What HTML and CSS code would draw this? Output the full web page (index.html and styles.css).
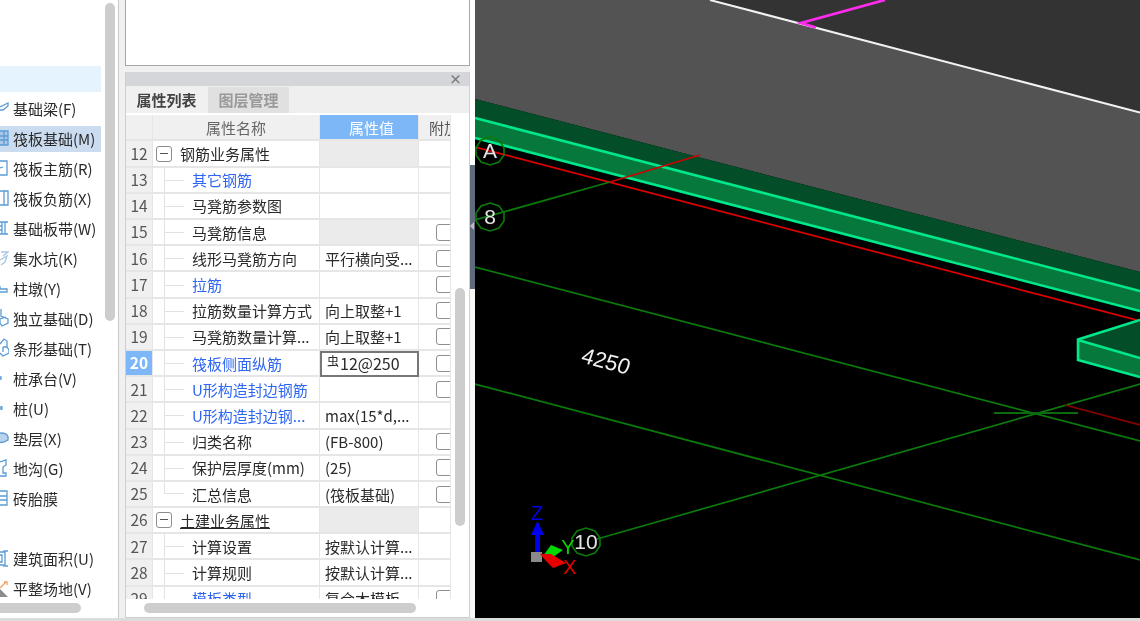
FILE: index.html
```html
<!DOCTYPE html>
<html lang="zh-CN">
<head>
<meta charset="utf-8">
<title>属性列表</title>
<link rel="stylesheet" href="styles.css">
</head>
<body>
<div class="app">
  <nav class="nav">
    <div class="item hover"></div>
    <div class="item"><svg class="ico" viewBox="0 0 9 20"><path d="M0 9 L8 5 L8 8 L3 12 L0 12"/></svg>基础梁(F)</div>
    <div class="item sel"><svg class="ico tint" viewBox="0 0 9 20"><path d="M0 3 H8 V17 H0 M0 8 H8 M0 12 H8 M4 3 V17"/></svg>筏板基础(M)</div>
    <div class="item"><svg class="ico" viewBox="0 0 9 20"><path d="M0 3 H7 V17 H0 M0 10 L3 9"/></svg>筏板主筋(R)</div>
    <div class="item"><svg class="ico" viewBox="0 0 9 20"><path d="M0 3 H8 V17 H0 M4 3 V17"/></svg>筏板负筋(X)</div>
    <div class="item"><svg class="ico" viewBox="0 0 9 20"><path d="M0 4 H8 M0 16 H8 M2 4 V16 M0 8 H2 M0 12 H2 M5 4 V16"/></svg>基础板带(W)</div>
    <div class="item"><svg class="ico soft" viewBox="0 0 9 20"><path d="M1 4 H8 L3 8 M0 12 L7 8 L5 14 L1 17"/></svg>集水坑(K)</div>
    <div class="item"><svg class="ico" viewBox="0 0 9 20"><path d="M0 8 V11 M0 11 H7 V14 H0" /></svg>柱墩(Y)</div>
    <div class="item"><svg class="ico" viewBox="0 0 9 20"><path d="M1 1 V8 L8 11 V15 L2 18 L0 15 V11 L6 9"/></svg>独立基础(D)</div>
    <div class="item"><svg class="ico" viewBox="0 0 9 20"><path d="M0 6 L4 1 L7 3 V9 L9 12 V15 L3 18 L0 15 M3 9 L7 9 M3 9 V14"/></svg>条形基础(T)</div>
    <div class="item"><svg class="ico" viewBox="0 0 9 20"><path d="M0 9 H1 V11 H0"/></svg>桩承台(V)</div>
    <div class="item"><svg class="ico" viewBox="0 0 9 20"><path d="M0 9 H2 V11 H0"/></svg>桩(U)</div>
    <div class="item"><svg class="ico fill" viewBox="0 0 9 20"><ellipse cx="1" cy="9" rx="7" ry="4"/><path d="M-6 9 V12 Q1 17 8 12 V9"/></svg>垫层(X)</div>
    <div class="item"><svg class="ico" viewBox="0 0 9 20"><path d="M0 4 L6 2 V7 L3 9 V15 H6 V18 H0"/></svg>地沟(G)</div>
    <div class="item"><svg class="ico" viewBox="0 0 9 20"><path d="M0 3 H7 V17 H0 M0 8 H7 M0 12 H7"/></svg>砖胎膜</div>
    <div class="item"></div>
    <div class="item"><svg class="ico" viewBox="0 0 9 20"><path d="M0 4 H5 V17 H0 M5 3 H8 M5 18 H8 M4 4 V2 M4 19 V17 M0 7 H2 V14 H0"/></svg>建筑面积(U)</div>
    <div class="item"><svg class="ico orange" viewBox="0 0 9 20"><path d="M0 10 L6 4 M4 4 H7 V7"/><path class="grey" d="M0 11 L8 19 H0 Z"/></svg>平整场地(V)</div>
    <i class="thumb nav-v"></i>
    <i class="thumb nav-h"></i>
  </nav>

  <main class="side">
    <div class="blank"></div>
    <section class="props">
      <header class="title"><span class="close">×</span></header>
      <div class="tabs">
        <span class="tab on">属性列表</span>
        <span class="tab">图层管理</span>
      </div>
      <div class="grid">
        <div class="row head"><span class="no"></span><span class="name">属性名称</span><span class="val">属性值</span><span class="ext">附加</span></div>
        <div class="row"><span class="no">12</span><span class="name group"><b class="fold"></b>钢筋业务属性</span><span class="val off"></span><span class="ext"></span></div>
        <div class="row"><span class="no">13</span><span class="name link"><i class="tree"></i>其它钢筋</span><span class="val"></span><span class="ext"></span></div>
        <div class="row"><span class="no">14</span><span class="name"><i class="tree"></i>马凳筋参数图</span><span class="val"></span><span class="ext"></span></div>
        <div class="row"><span class="no">15</span><span class="name"><i class="tree"></i>马凳筋信息</span><span class="val off"></span><span class="ext"><i class="chk"></i></span></div>
        <div class="row"><span class="no">16</span><span class="name"><i class="tree"></i>线形马凳筋方向</span><span class="val">平行横向受...</span><span class="ext"><i class="chk"></i></span></div>
        <div class="row"><span class="no">17</span><span class="name link"><i class="tree"></i>拉筋</span><span class="val"></span><span class="ext"><i class="chk"></i></span></div>
        <div class="row"><span class="no">18</span><span class="name"><i class="tree"></i>拉筋数量计算方式</span><span class="val">向上取整+1</span><span class="ext"><i class="chk"></i></span></div>
        <div class="row"><span class="no">19</span><span class="name"><i class="tree"></i>马凳筋数量计算...</span><span class="val">向上取整+1</span><span class="ext"><i class="chk"></i></span></div>
        <div class="row"><span class="no cur">20</span><span class="name link"><i class="tree"></i>筏板侧面纵筋</span><span class="val edit"><span class="bar">虫</span>12@250</span><span class="ext"><i class="chk"></i></span></div>
        <div class="row"><span class="no">21</span><span class="name link"><i class="tree"></i>U形构造封边钢筋</span><span class="val"></span><span class="ext"><i class="chk"></i></span></div>
        <div class="row"><span class="no">22</span><span class="name link"><i class="tree"></i>U形构造封边钢...</span><span class="val">max(15*d,...</span><span class="ext"></span></div>
        <div class="row"><span class="no">23</span><span class="name"><i class="tree"></i>归类名称</span><span class="val">(FB-800)</span><span class="ext"><i class="chk"></i></span></div>
        <div class="row"><span class="no">24</span><span class="name"><i class="tree"></i>保护层厚度(mm)</span><span class="val">(25)</span><span class="ext"><i class="chk"></i></span></div>
        <div class="row"><span class="no">25</span><span class="name"><i class="tree end"></i>汇总信息</span><span class="val">(筏板基础)</span><span class="ext"><i class="chk"></i></span></div>
        <div class="row"><span class="no">26</span><span class="name group"><b class="fold"></b><u>土建业务属性</u></span><span class="val off"></span><span class="ext"></span></div>
        <div class="row"><span class="no">27</span><span class="name"><i class="tree"></i>计算设置</span><span class="val">按默认计算...</span><span class="ext"></span></div>
        <div class="row"><span class="no">28</span><span class="name"><i class="tree"></i>计算规则</span><span class="val">按默认计算...</span><span class="ext"></span></div>
        <div class="row"><span class="no">29</span><span class="name link"><i class="tree"></i>模板类型</span><span class="val">复合木模板</span><span class="ext"><i class="chk"></i></span></div>
      </div>
      <i class="thumb grid-v"></i>
      <i class="thumb grid-h"></i>
    </section>
  </main>

  <div class="split"><span class="handle"></span></div>

  <svg class="view" viewBox="475 0 665 618" xmlns="http://www.w3.org/2000/svg">
    <rect x="475" y="0" width="665" height="618" fill="#000"/>
    <polygon points="710,0 1140,112.6 1140,0" fill="#333"/>
    <polygon points="475,0 710,0 1140,112.6 1140,272 475,99" fill="#535353"/>
    <line x1="710" y1="0" x2="1140" y2="112.6" stroke="#f2f2f2" stroke-width="2"/>
    <polyline points="885,0 801,23 816,27.5" fill="none" stroke="#ff2cf0" stroke-width="2.8"/>

    <polygon points="475,99 1140,272 1140,291 475,118" fill="#034d28"/>
    <polygon points="475,118 1140,291 1140,311 475,138" fill="#06783c"/>
    <line x1="475" y1="118" x2="1140" y2="291" stroke="#00e88c" stroke-width="2.6"/>
    <line x1="475" y1="138" x2="1140" y2="311" stroke="#00e88c" stroke-width="2.6"/>

    <line x1="475" y1="147" x2="1140" y2="321" stroke="#e00000" stroke-width="1.7"/>
    <line x1="610" y1="182" x2="700" y2="155" stroke="#d00000" stroke-width="1.5"/>
    <line x1="475" y1="220" x2="610" y2="182" stroke="#0b7a0b" stroke-width="1.7"/>

    <polygon points="1078,340 1140,320 1140,358" fill="#034d28"/>
    <polygon points="1078,340 1140,358 1140,377 1078,360" fill="#06783c"/>
    <polyline points="1140,320 1078,339.5 1078,360 1140,377" fill="none" stroke="#00e88c" stroke-width="2.6"/>
    <line x1="1078" y1="340" x2="1140" y2="358" stroke="#00e88c" stroke-width="2.6"/>

    <line x1="475" y1="267" x2="1140" y2="441" stroke="#0b7a0b" stroke-width="1.7"/>
    <line x1="597" y1="539" x2="1140" y2="384" stroke="#0b7a0b" stroke-width="1.7"/>
    <line x1="475" y1="384" x2="1140" y2="560" stroke="#0b7a0b" stroke-width="1.7"/>
    <line x1="994" y1="413" x2="1078" y2="413" stroke="#0b6a0b" stroke-width="1.8"/>
    <line x1="1065" y1="405" x2="1140" y2="425" stroke="#8a0000" stroke-width="1.7"/>

    <polygon class="hex" points="490,137 499,140 504,148 504,155 499,162 490,165 481,162 476,155 476,148 481,140"/>
    <polygon class="hex" points="490,203 499,206 504,213 504,221 499,228 490,231 481,228 476,221 476,213 481,206"/>
    <polygon class="hex" points="586,528 595,531 600,538 600,546 595,553 586,556 577,553 572,546 572,538 577,531"/>
    <text class="axis" x="490" y="158">A</text>
    <text class="axis" x="490" y="224">8</text>
    <text class="axis" x="586" y="549">10</text>
    <text class="dim" transform="translate(580 362) rotate(15) skewX(-4)">4250</text>

    <rect x="535" y="535" width="5" height="18" fill="#0000ee"/>
    <polygon points="537.5,521 544,535 531,535" fill="#0000ee"/>
    <text class="gz" x="537" y="520" fill="#0000e6">Z</text>
    <polygon points="543,556 551,545 563,550 553,557" fill="#00d800"/>
    <rect x="531" y="552" width="11" height="10" fill="#8a8a8a"/>
    <polygon points="540,554 551,554 566,563 553,568 546,561" fill="#e60000"/>
    <text class="gz" x="568" y="554" fill="#00d800">Y</text>
    <text class="gz" x="570" y="574" fill="#e60000">X</text>
  </svg>
</div>
</body>
</html>
```

FILE: styles.css
```css
* { box-sizing: border-box; }
html, body { margin: 0; height: 100%; overflow: hidden; }
body {
  background: #f0f0f0;
  font: 15px/1 "Noto Sans CJK SC", "Noto Sans", sans-serif;
  color: #2a2a2a;
}
.app {
  display: flex;
  width: 1140px;
  height: 621px;
  padding-bottom: 3px;
  filter: blur(.3px);
  background: #dcdcdc;
}

/* left navigation */
.nav {
  position: relative;
  flex: none;
  width: 119px;
  padding-top: 66px;
  background: #fff;
  border-right: 1px solid #c8c8c8;
  overflow: hidden;
}
.item {
  display: flex;
  align-items: center;
  gap: 4px;
  width: 101px;
  height: 26px;
  margin-bottom: 4px;
  padding-bottom: 2px;
  white-space: nowrap;
}
.item.hover { background: #e5f3ff; }
.item.sel { background: #cbdcf0; }
.ico {
  flex: none;
  width: 9px;
  height: 20px;
  overflow: hidden;
  fill: none;
  stroke: #5b9bd5;
  stroke-width: 1.3;
}
.ico.tint { fill: #a9c8ea; }
.ico.soft { stroke: #a9c6e4; }
.ico.fill { fill: #b9d3ec; }
.ico.orange { stroke: #f0a060; }
.ico .grey { fill: #8c8c8c; stroke: none; }

.thumb { position: absolute; display: block; background: #cdcdcd; border-radius: 5px; }
.nav-v { left: 105px; top: 3px; width: 10px; height: 318px; }
.nav-h { left: -10px; top: 603px; width: 91px; height: 10px; }

/* centre column */
.side {
  flex: none;
  display: flex;
  flex-direction: column;
  gap: 6px;
  width: 351px;
  padding-left: 6px;
  background: #f0f0f0;
}
.blank {
  flex: none;
  height: 66px;
  background: #fff;
  border: 1px solid #a6a6a6;
  border-top: 0;
}
.props {
  position: relative;
  flex: 1;
  background: #fff;
  border: 1px solid #cfcfcf;
  border-top: 0;
  overflow: hidden;
}
.title {
  display: flex;
  justify-content: flex-end;
  align-items: center;
  height: 14px;
  padding-right: 7px;
  background: #d4d6d9;
}
.close { font-size: 13px; line-height: 12px; font-weight: 700; color: #777; }
.tabs {
  display: flex;
  height: 29.3px;
  padding-top: 1px;
  background: #efefef;
  border-bottom: 2px solid #fff;
}
.tab {
  display: flex;
  align-items: center;
  justify-content: center;
  width: 81px;
  margin-right: 1px;
  padding-bottom: 2px;
  font-weight: 700;
  color: #999;
  background: #e0e0e0;
}
.tab.on { color: #444; background: #f0f0f0; }

/* property grid */
.grid {
  width: 325px;
  height: 484.2px;
  overflow: hidden;
}
.row {
  display: grid;
  grid-template-columns: 27px 167px 99px 32px;
  height: 26.2px;
  white-space: nowrap;
}
.row > span {
  display: flex;
  align-items: center;
  border-bottom: 2px solid #e6e6e6;
  border-right: 1px solid #e6e6e6;
  overflow: hidden;
}
.no {
  justify-content: center;
  font-size: 15.5px;
  color: #555;
  background: #f0f0f0;
}
.no.cur { color: #fff; font-weight: 700; background: #7db7f7; }
.head > span {
  justify-content: center;
  color: #666;
  background: #f0f0f0;
}
.head .val { color: #fff; background: #7db7f7; }
.head .ext { justify-content: flex-start; padding-left: 10px; color: #555; }
.name.link { color: #2e66f2; }
.name.group { padding-left: 3px; }
.fold {
  position: relative;
  flex: none;
  width: 16px;
  height: 16px;
  margin-right: 8px;
  background: #fff;
  border: 1px solid #8c8c8c;
  border-radius: 3px;
}
.fold::after {
  content: "";
  position: absolute;
  left: 3px;
  right: 3px;
  top: 6px;
  height: 1px;
  background: #555;
}
.tree {
  flex: none;
  width: 20px;
  height: 100%;
  margin: 0 8px 0 11px;
  border-left: 1px solid #e2e2e2;
}
.tree::after {
  content: "";
  display: block;
  height: 50%;
  border-bottom: 1px solid #e2e2e2;
}
.tree.end { align-self: flex-start; height: 50%; border-bottom: 1px solid #e2e2e2; }
.tree.end::after { display: none; }
.val { padding-left: 5px; }
.val.off { background: #ebebeb; }
.val.edit {
  padding: 0 0 3px 5px;
  font-size: 16px;
  border: 2px solid #777 !important;
}
.bar { font-size: 12px; line-height: 1; margin: 0 1px 4px 0; }
.ext { padding-left: 17px; }
.chk {
  flex: none;
  width: 17px;
  height: 17px;
  background: #fff;
  border: 1px solid #8f8f8f;
  border-radius: 3px;
}
.grid-v { left: 329px; top: 216px; width: 10px; height: 238px; }
.grid-h { left: 18px; top: 531px; width: 272px; height: 10px; }

/* splitter and model view */
.split {
  position: relative;
  flex: none;
  width: 5px;
  background: linear-gradient(#fff 165px, #5f6b7a 165px, #5f6b7a 289px, #f7f7f7 289px);
}
.handle {
  position: absolute;
  left: 0;
  top: 222px;
  border: 4px solid transparent;
  border-left: 0;
  border-right: 4px solid #b8bec6;
}
.view { flex: none; display: block; width: 665px; height: 618px; }
.hex { fill: none; stroke: #0b7a0b; stroke-width: 1.6; }
.axis { font: 21px "Liberation Sans", sans-serif; fill: #e4e4e4; text-anchor: middle; }
.dim { font: 22px "Liberation Sans", sans-serif; fill: #f0f0f0; }
.gz { font: 20px "Liberation Sans Narrow", "Liberation Sans", sans-serif; text-anchor: middle; }
```
